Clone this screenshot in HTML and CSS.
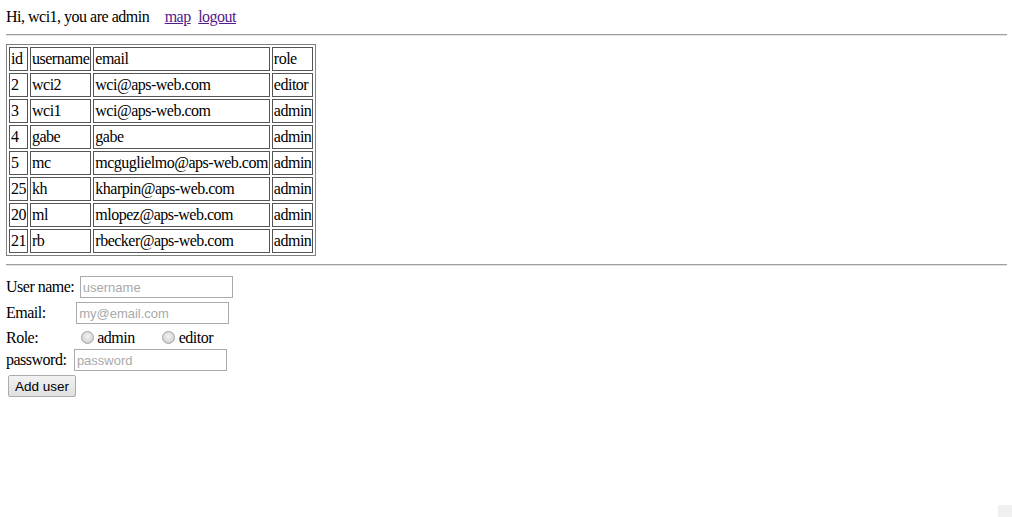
FILE: index.html
```html
<!DOCTYPE html>
<html lang="en">
<head>
    <meta charset="UTF-8">
    <title>Users</title>
    <link rel="stylesheet" href="styles.css">
</head>
<body>

    <div class="saludo">Hi, wci1, you are admin <a href="#" class="link-map">map</a> <a href="#" class="link-logout">logout</a></div>
    <hr>

    <table class="usuarios" border="1">
        <tr><td>id</td><td>username</td><td>email</td><td>role</td></tr>
        <tr><td>2</td><td>wci2</td><td>wci@aps-web.com</td><td>editor</td></tr>
        <tr><td>3</td><td>wci1</td><td>wci@aps-web.com</td><td>admin</td></tr>
        <tr><td>4</td><td>gabe</td><td>gabe</td><td>admin</td></tr>
        <tr><td>5</td><td>mc</td><td>mcguglielmo@aps-web.com</td><td>admin</td></tr>
        <tr><td>25</td><td>kh</td><td>kharpin@aps-web.com</td><td>admin</td></tr>
        <tr><td>20</td><td>ml</td><td>mlopez@aps-web.com</td><td>admin</td></tr>
        <tr><td>21</td><td>rb</td><td>rbecker@aps-web.com</td><td>admin</td></tr>
    </table>
    <hr>

    <form class="nuevo">
        <div class="fila">User name: <input type="text" class="campo campo-nombre" placeholder="username"></div>
        <div class="fila">Email: <input type="text" class="campo campo-email" placeholder="my@email.com"></div>
        <div class="fila fila-role">Role: <input type="radio" name="role" class="radio-admin"> admin <input type="radio" name="role" class="radio-editor"> editor</div>
        <div class="fila">password: <input type="password" class="campo campo-pass" placeholder="password"></div>
        <button type="button" class="boton">Add user</button>
    </form>

    <div class="esquina"></div>
</body>
</html>
```

FILE: styles.css
```css
body {
    margin: 8px 5px 0 6px;
    font-family: "Liberation Serif", "Times New Roman", serif;
    font-size: 16px;
    letter-spacing: -0.5px;
    color: #000;
    background: #fff;
}

a {
    color: #551a8b;
}

.saludo {
    line-height: 18px;
}

.link-map {
    margin-left: 12px;
}

.link-logout {
    margin-left: 4px;
}

hr {
    margin: 8px 0;
    border: none;
    border-top: 1px solid #a0a0a0;
    border-bottom: 1px solid #e3e3e3;
}

.usuarios {
    border-collapse: separate;
    border-spacing: 2px;
    border: 1px solid #808080;
    margin-top: 8px;
}

.usuarios td {
    border: 1px solid #555;
    padding: 1px;
    line-height: 20px;
}

.nuevo {
    margin-top: 10px;
}

.fila {
    height: 24px;
    line-height: 22px;
    margin-bottom: 2px;
}

.fila-role {
    height: 19px;
    line-height: 19px;
}

.campo {
    box-sizing: border-box;
    width: 153px;
    height: 22px;
    margin: 0;
    padding: 1px 2px;
    border: 1px solid #ababab;
    font-family: "Liberation Sans", Arial, sans-serif;
    font-size: 13px;
    letter-spacing: 0;
    vertical-align: top;
}

.campo::placeholder {
    color: #a9a9a9;
}

.campo-nombre {
    margin-left: 2px;
}

.campo-email {
    margin-left: 27px;
}

.campo-pass {
    margin-left: 4px;
}

/* radios grises, con relleno degradado */
input[type="radio"] {
    appearance: none;
    box-sizing: border-box;
    width: 13px;
    height: 13px;
    border: 1px solid #a2a2a2;
    border-radius: 50%;
    background: radial-gradient(circle at 50% 40%, #f4f4f4, #d4d4d4 70%, #c4c4c4);
    vertical-align: -1px;
}

.radio-admin {
    margin: 0 0 0 39px;
}

.radio-editor {
    margin: 0 0 0 24px;
}

.boton {
    display: block;
    margin: 0 0 0 2px;
    height: 22px;
    padding: 0 6px;
    font-family: "Liberation Sans", Arial, sans-serif;
    font-size: 13.5px;
    letter-spacing: 0;
    border: 1px solid #acacac;
    border-radius: 2px;
    background: linear-gradient(#f2f2f2, #e0e0e0);
}

.esquina {
    position: fixed;
    right: 0;
    bottom: 0;
    width: 14px;
    height: 12px;
    background: #f0f0f0;
}
```
